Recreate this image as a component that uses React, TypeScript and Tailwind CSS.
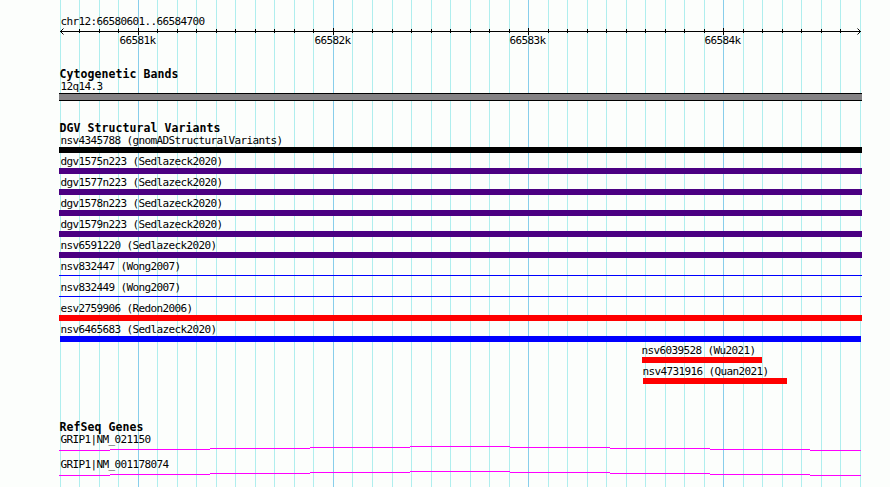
const GRID = [
  60, 79, 99, 118, 138, 157, 177, 196, 216, 235, 255, 274, 294, 313, 333, 352, 372, 392, 411, 431, 450,
  470, 489, 509, 528, 548, 567, 587, 606, 626, 645, 665, 684, 704, 723, 743, 762, 782, 801, 821, 840, 860,
];
const MAJOR = [138, 333, 528, 723];
const TICK_LABELS = [
  { x: 119.5, text: "66581k" },
  { x: 314.5, text: "66582k" },
  { x: 509.5, text: "66583k" },
  { x: 704.5, text: "66584k" },
];

type Variant = { label: string; indent: string; bar: string };

const VARIANTS: Variant[] = [
  { label: "nsv4345788 (gnomADStructuralVariants)", indent: "pl-[1.5px]", bar: "h-1.5 w-[803px] bg-black" },
  { label: "dgv1575n223 (Sedlazeck2020)", indent: "pl-[1.5px]", bar: "h-1.5 w-[803px] bg-[#4b0082]" },
  { label: "dgv1577n223 (Sedlazeck2020)", indent: "pl-[1.5px]", bar: "h-1.5 w-[803px] bg-[#4b0082]" },
  { label: "dgv1578n223 (Sedlazeck2020)", indent: "pl-[1.5px]", bar: "h-1.5 w-[803px] bg-[#4b0082]" },
  { label: "dgv1579n223 (Sedlazeck2020)", indent: "pl-[1.5px]", bar: "h-1.5 w-[803px] bg-[#4b0082]" },
  { label: "nsv6591220 (Sedlazeck2020)", indent: "pl-[1.5px]", bar: "h-1.5 w-[803px] bg-[#4b0082]" },
  { label: "nsv832447 (Wong2007)", indent: "pl-[1.5px]", bar: "mt-[2px] h-px w-[803px] bg-[#0000ff]" },
  { label: "nsv832449 (Wong2007)", indent: "pl-[1.5px]", bar: "mt-[2px] h-px w-[803px] bg-[#0000ff]" },
  { label: "esv2759906 (Redon2006)", indent: "pl-[1.5px]", bar: "h-1.5 w-[803px] bg-[#ff0000]" },
  { label: "nsv6465683 (Sedlazeck2020)", indent: "pl-[1.5px]", bar: "ml-px h-1.5 w-[801px] bg-[#0000ff]" },
  { label: "nsv6039528 (Wu2021)", indent: "pl-[582.5px]", bar: "ml-[583px] h-1.5 w-[120px] bg-[#ff0000]" },
  { label: "nsv4731916 (Quan2021)", indent: "pl-[583.5px]", bar: "ml-[584px] h-1.5 w-[144px] bg-[#ff0000]" },
];

const LABEL = "h-[13px] text-[11px] leading-[13px] tracking-[-0.622px] whitespace-pre";
const TITLE = "h-3 pl-[0.5px] text-[11.5px] leading-[13px] font-bold tracking-[0.077px] whitespace-pre";

function GridLines() {
  return (
    <svg className="absolute inset-0" width="890" height="487" shapeRendering="crispEdges">
      {GRID.map((x) => (
        <rect key={x} x={x} y="0" width="1" height="487" fill={MAJOR.includes(x) ? "#87ceeb" : "#afeeee"} />
      ))}
    </svg>
  );
}

function Ruler() {
  return (
    <svg className="block" width="831" height="21" viewBox="59 27 831 21">
      <g shapeRendering="crispEdges">
        <rect x="60" y="31" width="801" height="1" />
        {GRID.slice(1, -1).map((x) =>
          MAJOR.includes(x) ? (
            <rect key={x} x={x} y="28" width="1" height="7" />
          ) : (
            <rect key={x} x={x} y="29" width="1" height="4" />
          ),
        )}
      </g>
      <path d="M63.5 28.5L60.5 31.5L63.5 34.5M857.5 28.5L860.5 31.5L857.5 34.5" fill="none" stroke="#000" />
      {TICK_LABELS.map((t) => (
        <text key={t.text} x={t.x} y="44" className="text-[11px] tracking-[-0.622px]">
          {t.text}
        </text>
      ))}
    </svg>
  );
}

function Gene({ label }: { label: string }) {
  return (
    <div className="h-[25px]">
      <div className={LABEL + " pl-[1.5px]"}>{label}</div>
      <svg className="block" width="803" height="5" viewBox="59 446 803 5" shapeRendering="crispEdges" fill="#ff00ff">
        <rect x="59" y="450" width="51" height="1" />
        <rect x="110" y="449" width="100" height="1" />
        <rect x="210" y="448" width="100" height="1" />
        <rect x="310" y="447" width="100" height="1" />
        <rect x="410" y="446" width="100" height="1" />
        <rect x="510" y="447" width="100" height="1" />
        <rect x="610" y="448" width="100" height="1" />
        <rect x="710" y="449" width="100" height="1" />
        <rect x="810" y="450" width="51" height="1" />
      </svg>
    </div>
  );
}

export default function App() {
  return (
    <div className="relative h-[487px] w-[890px] overflow-hidden bg-[#fcfefc] font-['DejaVu_Sans_Mono',monospace] text-black">
      <GridLines />
      <main className="relative flex flex-col pt-[15px] pl-[59px]">
        <div className={LABEL + " mb-[-1px] pl-[1.5px]"}>chr12:66580601..66584700</div>
        <Ruler />
        <section className="mt-5 h-[54px]">
          <h2 className={TITLE}>Cytogenetic Bands</h2>
          <div>
            <div className={LABEL + " pl-[1.5px]"}>12q14.3</div>
            <div className="h-2 w-[803px] border-y border-black bg-[#848284]" />
          </div>
        </section>
        <section className="h-[299px]">
          <h2 className={TITLE}>DGV Structural Variants</h2>
          <div>
            {VARIANTS.map((v) => (
              <div key={v.label} className="h-[21px]">
                <div className={LABEL + " " + v.indent}>{v.label}</div>
                <div className={v.bar} />
              </div>
            ))}
          </div>
        </section>
        <section>
          <h2 className={TITLE}>RefSeq Genes</h2>
          <div>
            <Gene label="GRIP1|NM_021150" />
            <Gene label="GRIP1|NM_001178074" />
          </div>
        </section>
      </main>
    </div>
  );
}
